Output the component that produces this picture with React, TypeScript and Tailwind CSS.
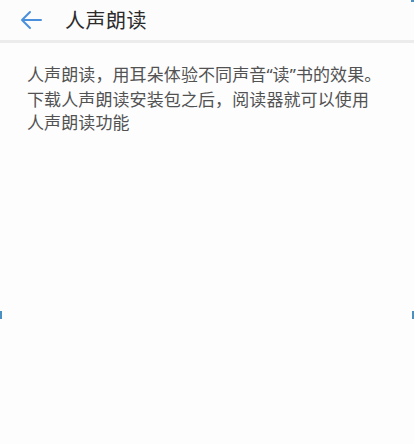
import React from "react";

export default function App() {
  return (
    <div className="relative w-[414px] h-[444px] bg-[#fdfdfe] overflow-hidden font-['Noto_Sans_CJK_SC','Noto_Sans',sans-serif]">
      <div className="h-[40px] flex items-center bg-[#fcfcfd]">
        <div className="w-[65px] flex items-center pl-[19px]">
          <svg width="24" height="20" viewBox="0 0 24 20" fill="none">
            <path
              d="M22 10H3M11 2L3 10L11 18"
              stroke="#4a8fdc"
              strokeWidth="2"
              strokeLinecap="round"
              strokeLinejoin="round"
            />
          </svg>
        </div>
        <span className="text-[20px] leading-none text-[#2b2b2b] tracking-[0.5px]">人声朗读</span>
      </div>
      <div className="h-[3px] bg-[#ececec]" />
      <div className="pl-[27px] pt-[19px] text-[17px] leading-[23.5px] tracking-[0.1px] text-[#525252]">
        <p>
          人声朗读，用耳朵体验不同声音<span className="font-['Noto_Sans',sans-serif]">“</span>读
          <span className="font-['Noto_Sans',sans-serif]">”</span>书的效果。
        </p>
        <p>下载人声朗读安装包之后，阅读器就可以使用</p>
        <p>人声朗读功能</p>
      </div>
      <div className="absolute left-0 top-[311px] w-[2px] h-[8px] bg-[#4a90c0]" />
      <div className="absolute right-0 top-[311px] w-[2px] h-[8px] bg-[#4a90c0]" />
      <div className="absolute right-0 top-0 w-[3px] h-[2px] bg-[#4a90c0]" />
    </div>
  );
}
